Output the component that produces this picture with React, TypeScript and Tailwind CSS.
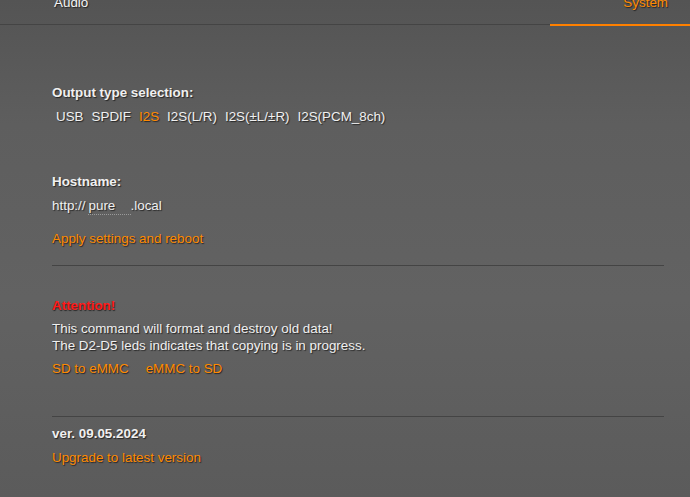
import { useState } from 'react';

const shadow = '[text-shadow:1px_1px_1px_rgba(0,0,0,0.6)]';

export default function App() {
  const [output, setOutput] = useState('I2S');
  const [host, setHost] = useState('pure');
  const options = ['USB', 'SPDIF', 'I2S', 'I2S(L/R)', 'I2S(±L/±R)', 'I2S(PCM_8ch)'];

  return (
    <div
      className={`w-[690px] h-[497px] overflow-hidden bg-[linear-gradient(180deg,#545454_0%,#5e5e5e_25%,#626262_60%,#5b5b5b_100%)] text-[13.4px] text-[#f0f0f0] ${shadow}`}
      style={{ fontFamily: '"Liberation Sans", Arial, sans-serif' }}
    >
      {/* tabs */}
      <div className="h-[25px] flex justify-between border-b border-[#444]">
        <div className="pl-[54px] -mt-[5px] leading-[16px] text-[#f4f4f4]">Audio</div>
        <div className="w-[140px] -mt-[5px] leading-[16px] text-right pr-[22px] text-[#ff8a00] border-b-2 border-[#ff8000] -mb-px h-[31px]">
          System
        </div>
      </div>

      <div className="pl-[52px] pr-[26px]">
        {/* output */}
        <div className="pt-[60px] font-bold leading-[16px]">Output type selection:</div>
        <div className="flex gap-[8px] pl-[4px] mt-[8px] leading-[16px]">
          {options.map((o) => (
            <span
              key={o}
              onClick={() => setOutput(o)}
              className={o === output ? 'text-[#ff8a00] cursor-pointer' : 'cursor-pointer'}
            >
              {o}
            </span>
          ))}
        </div>

        {/* hostname */}
        <div className="mt-[49px] font-bold leading-[16px]">Hostname:</div>
        <div className="flex items-baseline mt-[8px] leading-[16px]">
          <span>http://</span>
          <input
            value={host}
            onChange={(e) => setHost(e.target.value)}
            className={`ml-[2px] w-[43px] bg-transparent outline-none text-[#f0f0f0] border-b border-dotted border-[#999] leading-[16px] pl-[1px] ${shadow}`}
          />
          <span>.local</span>
        </div>
        <div className="mt-[16px] leading-[16px] text-[#ff8a00]">Apply settings and reboot</div>

        <div className="mt-[18px] border-t border-[#444]" />

        {/* attention */}
        <div className="mt-[32px] leading-[16px] font-bold text-[#ff1a1a]">Attention!</div>
        <div className="mt-[6px] leading-[17px]">
          This command will format and destroy old data!
          <br />
          The D2-D5 leds indicates that copying is in progress.
        </div>
        <div className="flex gap-[17px] mt-[7px] leading-[16px] text-[#ff8a00]">
          <span>SD to eMMC</span>
          <span>eMMC to SD</span>
        </div>

        <div className="mt-[39px] border-t border-[#444]" />

        {/* version */}
        <div className="mt-[9px] font-bold leading-[16px]">ver. 09.05.2024</div>
        <div className="mt-[8px] leading-[16px] text-[#ff8a00]">Upgrade to latest version</div>
      </div>
    </div>
  );
}
